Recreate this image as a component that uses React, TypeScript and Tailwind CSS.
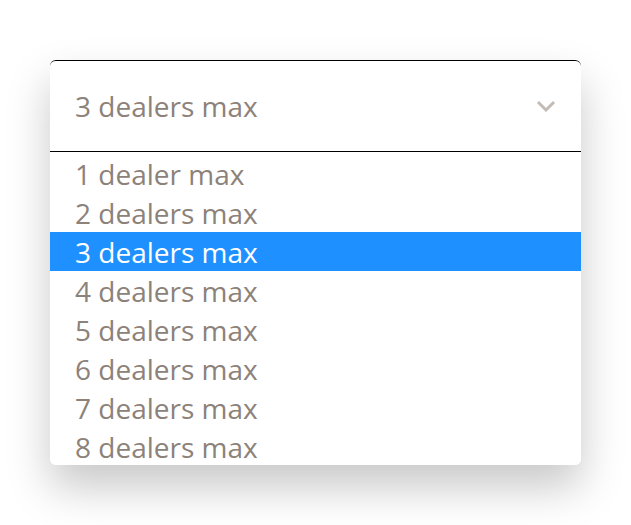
const options = [1, 2, 3, 4, 5, 6, 7, 8];

export default function App() {
  const selected = 3;
  const label = (n: number) => (n === 1 ? "1 dealer max" : `${n} dealers max`);

  return (
    <div className="w-[631px] h-[525px] bg-white pt-[60px] pl-[50px] font-['Open_Sans',sans-serif]">
      <div className="w-[531px] shadow-[0_22px_44px_rgba(0,0,0,0.22)] rounded-md">
        {/* Trigger */}
        <div className="h-[92px] bg-white rounded-t-md border-t border-b border-black flex items-center justify-between pl-[25px] pr-[25px]">
          <span className="text-[28px] text-[#8c827a] leading-none">{label(selected)}</span>
          <svg width="20" height="12" viewBox="0 0 20 12" fill="none">
            <path d="M2 2 L10 10 L18 2" stroke="#c3bcb6" strokeWidth="3" />
          </svg>
        </div>

        {/* Options list */}
        <div className="mt-px h-[312px] bg-white rounded-md overflow-hidden pt-px">
          {options.map((n) => (
            <div
              key={n}
              className={
                n === selected
                  ? "h-[39px] flex items-center pl-[25px] bg-[#1e90ff] text-white text-[28px] leading-none"
                  : "h-[39px] flex items-center pl-[25px] text-[#8c827a] text-[28px] leading-none"
              }
            >
              {label(n)}
            </div>
          ))}
        </div>
      </div>
    </div>
  );
}
